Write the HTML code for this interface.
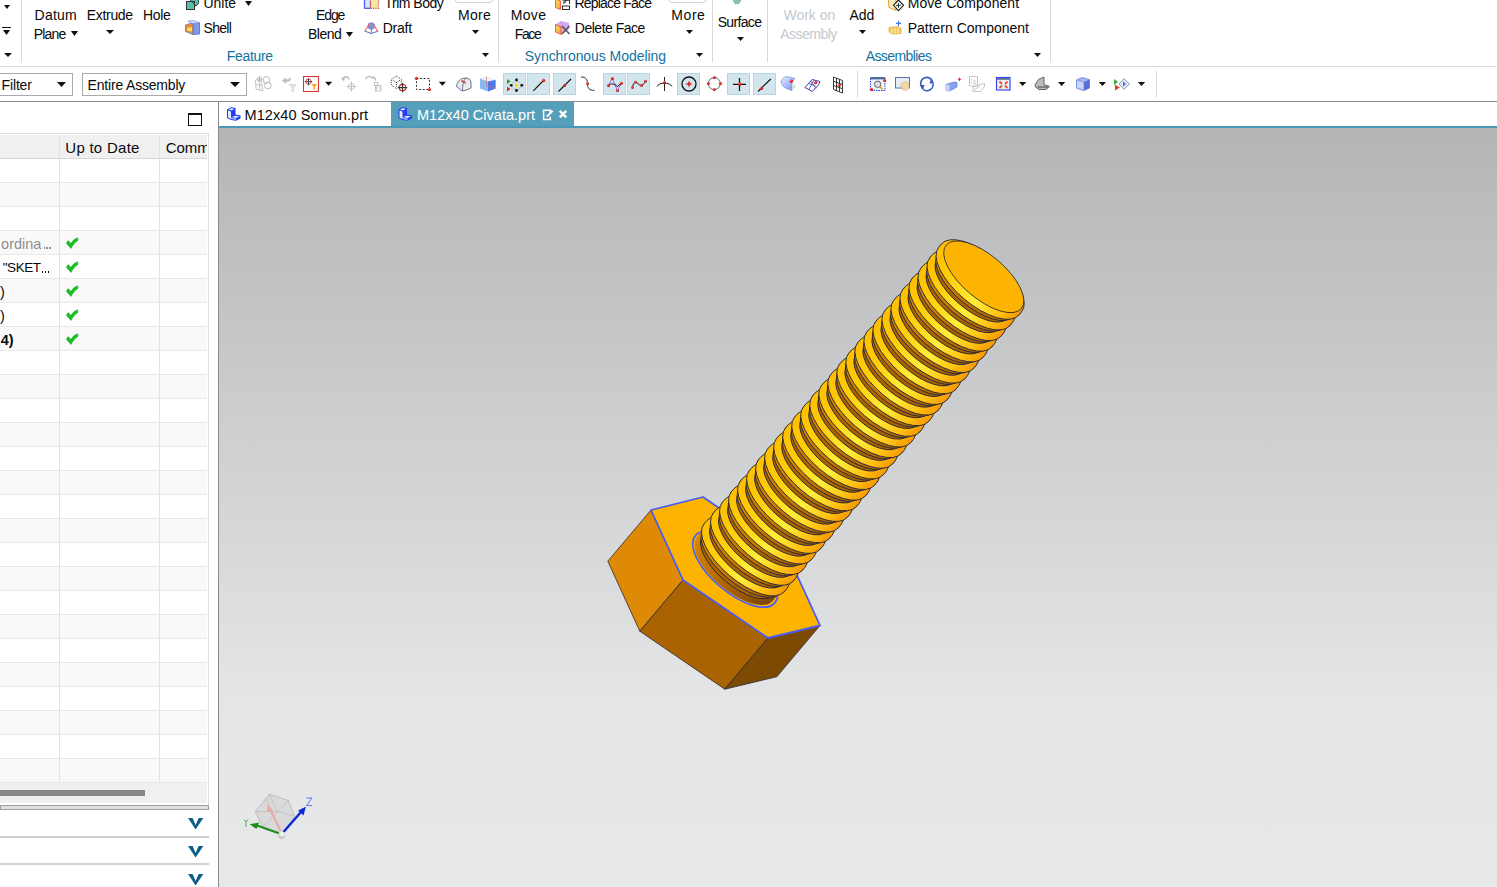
<!DOCTYPE html>
<html><head><meta charset="utf-8"><style>
html,body{margin:0;padding:0;width:1497px;height:887px;overflow:hidden;background:#fff}
body{position:relative;font-family:"Liberation Sans",sans-serif}
.t{position:absolute;white-space:nowrap;line-height:1}
.r{position:absolute}
</style></head><body>
<div class="r" style="left:219px;top:128px;width:1278px;height:759px;background:linear-gradient(#b4b5b7 0px,#e4e5e7 570px,#e7e8ea 759px)"></div>
<svg class="r" style="left:0;top:0" width="1497" height="887" viewBox="0 0 1497 887">
<defs>
<linearGradient id="gc" gradientUnits="userSpaceOnUse" x1="-52" y1="0" x2="52" y2="0">
<stop offset="0" stop-color="#ffbf00"/><stop offset="0.28" stop-color="#ffcf0a"/><stop offset="0.6" stop-color="#ffee3a"/><stop offset="0.85" stop-color="#ffc212"/><stop offset="1" stop-color="#f69a00"/></linearGradient>
<linearGradient id="gf" gradientUnits="userSpaceOnUse" x1="-52" y1="0" x2="52" y2="0">
<stop offset="0" stop-color="#e09000"/><stop offset="0.5" stop-color="#c47600"/><stop offset="1" stop-color="#a86000"/></linearGradient>
<linearGradient id="gn" gradientUnits="userSpaceOnUse" x1="-52" y1="0" x2="52" y2="0">
<stop offset="0" stop-color="#d88800"/><stop offset="0.6" stop-color="#a86000"/><stop offset="1" stop-color="#7a4400"/></linearGradient>
</defs>
<polygon points="651.0,510.0 683.0,580.0 639.8,631.2 607.8,561.2" fill="#de8a06" stroke="#2e2a30" stroke-width="0.8" stroke-linejoin="round"/>
<polygon points="683.0,580.0 768.0,638.0 724.8,689.2 639.8,631.2" fill="#a96300" stroke="#2e2a30" stroke-width="0.8" stroke-linejoin="round"/>
<polygon points="768.0,638.0 820.0,625.5 776.8,676.7 724.8,689.2" fill="#7c4a03" stroke="#2e2a30" stroke-width="0.8" stroke-linejoin="round"/>
<polygon points="651.0,510.0 703.0,497.0 788.0,555.5 820.0,625.5 768.0,638.0 683.0,580.0" fill="#fdb400" stroke="#4a5cf8" stroke-width="1.8" stroke-linejoin="round"/>
<g transform="matrix(0.76267,0.64679,-0.64679,0.76267,982.8,276.4)">
<ellipse cx="0.5" cy="383.5" rx="52" ry="22.88" fill="#fdb400" stroke="#4a5cf8" stroke-width="1.7"/>
<path d="M-49.50,369.50 A49.50,21.78 0 0 1 49.50,369.50 L49.50,383.50 A49.50,21.78 0 0 1 -49.50,383.50 Z" fill="url(#gn)" stroke="none"/>
<path d="M-49.25,373.63 A49.25,21.67 0 0 1 49.25,373.63 L46.00,378.65 A46.00,20.24 0 0 1 -46.00,378.65 Z" fill="#a86200" stroke="#2a2a38" stroke-width="0.9"/>
<path d="M-52.50,368.88 A52.50,23.10 0 0 1 52.50,368.88 L49.25,373.63 A49.25,21.67 0 0 1 -49.25,373.63 Z" fill="url(#gf)" stroke="#2a2a38" stroke-width="0.9"/>
<path d="M-52.50,364.70 A52.50,23.10 0 0 1 52.50,364.70 L52.50,368.88 A52.50,23.10 0 0 1 -52.50,368.88 Z" fill="url(#gc)" stroke="#2a2a38" stroke-width="0.9"/>
<path d="M-49.25,359.68 A49.25,21.67 0 0 1 49.25,359.68 L46.00,364.70 A46.00,20.24 0 0 1 -46.00,364.70 Z" fill="#a86200" stroke="#2a2a38" stroke-width="0.9"/>
<path d="M-52.50,354.94 A52.50,23.10 0 0 1 52.50,354.94 L49.25,359.68 A49.25,21.67 0 0 1 -49.25,359.68 Z" fill="url(#gf)" stroke="#2a2a38" stroke-width="0.9"/>
<path d="M-52.50,350.75 A52.50,23.10 0 0 1 52.50,350.75 L52.50,354.94 A52.50,23.10 0 0 1 -52.50,354.94 Z" fill="url(#gc)" stroke="#2a2a38" stroke-width="0.9"/>
<path d="M-49.25,345.73 A49.25,21.67 0 0 1 49.25,345.73 L46.00,350.75 A46.00,20.24 0 0 1 -46.00,350.75 Z" fill="#a86200" stroke="#2a2a38" stroke-width="0.9"/>
<path d="M-52.50,340.98 A52.50,23.10 0 0 1 52.50,340.98 L49.25,345.73 A49.25,21.67 0 0 1 -49.25,345.73 Z" fill="url(#gf)" stroke="#2a2a38" stroke-width="0.9"/>
<path d="M-52.50,336.80 A52.50,23.10 0 0 1 52.50,336.80 L52.50,340.98 A52.50,23.10 0 0 1 -52.50,340.98 Z" fill="url(#gc)" stroke="#2a2a38" stroke-width="0.9"/>
<path d="M-49.25,331.78 A49.25,21.67 0 0 1 49.25,331.78 L46.00,336.80 A46.00,20.24 0 0 1 -46.00,336.80 Z" fill="#a86200" stroke="#2a2a38" stroke-width="0.9"/>
<path d="M-52.50,327.03 A52.50,23.10 0 0 1 52.50,327.03 L49.25,331.78 A49.25,21.67 0 0 1 -49.25,331.78 Z" fill="url(#gf)" stroke="#2a2a38" stroke-width="0.9"/>
<path d="M-52.50,322.85 A52.50,23.10 0 0 1 52.50,322.85 L52.50,327.03 A52.50,23.10 0 0 1 -52.50,327.03 Z" fill="url(#gc)" stroke="#2a2a38" stroke-width="0.9"/>
<path d="M-49.25,317.83 A49.25,21.67 0 0 1 49.25,317.83 L46.00,322.85 A46.00,20.24 0 0 1 -46.00,322.85 Z" fill="#a86200" stroke="#2a2a38" stroke-width="0.9"/>
<path d="M-52.50,313.08 A52.50,23.10 0 0 1 52.50,313.08 L49.25,317.83 A49.25,21.67 0 0 1 -49.25,317.83 Z" fill="url(#gf)" stroke="#2a2a38" stroke-width="0.9"/>
<path d="M-52.50,308.90 A52.50,23.10 0 0 1 52.50,308.90 L52.50,313.08 A52.50,23.10 0 0 1 -52.50,313.08 Z" fill="url(#gc)" stroke="#2a2a38" stroke-width="0.9"/>
<path d="M-49.25,303.88 A49.25,21.67 0 0 1 49.25,303.88 L46.00,308.90 A46.00,20.24 0 0 1 -46.00,308.90 Z" fill="#a86200" stroke="#2a2a38" stroke-width="0.9"/>
<path d="M-52.50,299.13 A52.50,23.10 0 0 1 52.50,299.13 L49.25,303.88 A49.25,21.67 0 0 1 -49.25,303.88 Z" fill="url(#gf)" stroke="#2a2a38" stroke-width="0.9"/>
<path d="M-52.50,294.95 A52.50,23.10 0 0 1 52.50,294.95 L52.50,299.13 A52.50,23.10 0 0 1 -52.50,299.13 Z" fill="url(#gc)" stroke="#2a2a38" stroke-width="0.9"/>
<path d="M-49.25,289.93 A49.25,21.67 0 0 1 49.25,289.93 L46.00,294.95 A46.00,20.24 0 0 1 -46.00,294.95 Z" fill="#a86200" stroke="#2a2a38" stroke-width="0.9"/>
<path d="M-52.50,285.19 A52.50,23.10 0 0 1 52.50,285.19 L49.25,289.93 A49.25,21.67 0 0 1 -49.25,289.93 Z" fill="url(#gf)" stroke="#2a2a38" stroke-width="0.9"/>
<path d="M-52.50,281.00 A52.50,23.10 0 0 1 52.50,281.00 L52.50,285.19 A52.50,23.10 0 0 1 -52.50,285.19 Z" fill="url(#gc)" stroke="#2a2a38" stroke-width="0.9"/>
<path d="M-49.25,275.98 A49.25,21.67 0 0 1 49.25,275.98 L46.00,281.00 A46.00,20.24 0 0 1 -46.00,281.00 Z" fill="#a86200" stroke="#2a2a38" stroke-width="0.9"/>
<path d="M-52.50,271.24 A52.50,23.10 0 0 1 52.50,271.24 L49.25,275.98 A49.25,21.67 0 0 1 -49.25,275.98 Z" fill="url(#gf)" stroke="#2a2a38" stroke-width="0.9"/>
<path d="M-52.50,267.05 A52.50,23.10 0 0 1 52.50,267.05 L52.50,271.24 A52.50,23.10 0 0 1 -52.50,271.24 Z" fill="url(#gc)" stroke="#2a2a38" stroke-width="0.9"/>
<path d="M-49.25,262.03 A49.25,21.67 0 0 1 49.25,262.03 L46.00,267.05 A46.00,20.24 0 0 1 -46.00,267.05 Z" fill="#a86200" stroke="#2a2a38" stroke-width="0.9"/>
<path d="M-52.50,257.28 A52.50,23.10 0 0 1 52.50,257.28 L49.25,262.03 A49.25,21.67 0 0 1 -49.25,262.03 Z" fill="url(#gf)" stroke="#2a2a38" stroke-width="0.9"/>
<path d="M-52.50,253.10 A52.50,23.10 0 0 1 52.50,253.10 L52.50,257.28 A52.50,23.10 0 0 1 -52.50,257.28 Z" fill="url(#gc)" stroke="#2a2a38" stroke-width="0.9"/>
<path d="M-49.25,248.08 A49.25,21.67 0 0 1 49.25,248.08 L46.00,253.10 A46.00,20.24 0 0 1 -46.00,253.10 Z" fill="#a86200" stroke="#2a2a38" stroke-width="0.9"/>
<path d="M-52.50,243.33 A52.50,23.10 0 0 1 52.50,243.33 L49.25,248.08 A49.25,21.67 0 0 1 -49.25,248.08 Z" fill="url(#gf)" stroke="#2a2a38" stroke-width="0.9"/>
<path d="M-52.50,239.15 A52.50,23.10 0 0 1 52.50,239.15 L52.50,243.33 A52.50,23.10 0 0 1 -52.50,243.33 Z" fill="url(#gc)" stroke="#2a2a38" stroke-width="0.9"/>
<path d="M-49.25,234.13 A49.25,21.67 0 0 1 49.25,234.13 L46.00,239.15 A46.00,20.24 0 0 1 -46.00,239.15 Z" fill="#a86200" stroke="#2a2a38" stroke-width="0.9"/>
<path d="M-52.50,229.38 A52.50,23.10 0 0 1 52.50,229.38 L49.25,234.13 A49.25,21.67 0 0 1 -49.25,234.13 Z" fill="url(#gf)" stroke="#2a2a38" stroke-width="0.9"/>
<path d="M-52.50,225.20 A52.50,23.10 0 0 1 52.50,225.20 L52.50,229.38 A52.50,23.10 0 0 1 -52.50,229.38 Z" fill="url(#gc)" stroke="#2a2a38" stroke-width="0.9"/>
<path d="M-49.25,220.18 A49.25,21.67 0 0 1 49.25,220.18 L46.00,225.20 A46.00,20.24 0 0 1 -46.00,225.20 Z" fill="#a86200" stroke="#2a2a38" stroke-width="0.9"/>
<path d="M-52.50,215.44 A52.50,23.10 0 0 1 52.50,215.44 L49.25,220.18 A49.25,21.67 0 0 1 -49.25,220.18 Z" fill="url(#gf)" stroke="#2a2a38" stroke-width="0.9"/>
<path d="M-52.50,211.25 A52.50,23.10 0 0 1 52.50,211.25 L52.50,215.44 A52.50,23.10 0 0 1 -52.50,215.44 Z" fill="url(#gc)" stroke="#2a2a38" stroke-width="0.9"/>
<path d="M-49.25,206.23 A49.25,21.67 0 0 1 49.25,206.23 L46.00,211.25 A46.00,20.24 0 0 1 -46.00,211.25 Z" fill="#a86200" stroke="#2a2a38" stroke-width="0.9"/>
<path d="M-52.50,201.48 A52.50,23.10 0 0 1 52.50,201.48 L49.25,206.23 A49.25,21.67 0 0 1 -49.25,206.23 Z" fill="url(#gf)" stroke="#2a2a38" stroke-width="0.9"/>
<path d="M-52.50,197.30 A52.50,23.10 0 0 1 52.50,197.30 L52.50,201.48 A52.50,23.10 0 0 1 -52.50,201.48 Z" fill="url(#gc)" stroke="#2a2a38" stroke-width="0.9"/>
<path d="M-49.25,192.28 A49.25,21.67 0 0 1 49.25,192.28 L46.00,197.30 A46.00,20.24 0 0 1 -46.00,197.30 Z" fill="#a86200" stroke="#2a2a38" stroke-width="0.9"/>
<path d="M-52.50,187.53 A52.50,23.10 0 0 1 52.50,187.53 L49.25,192.28 A49.25,21.67 0 0 1 -49.25,192.28 Z" fill="url(#gf)" stroke="#2a2a38" stroke-width="0.9"/>
<path d="M-52.50,183.35 A52.50,23.10 0 0 1 52.50,183.35 L52.50,187.53 A52.50,23.10 0 0 1 -52.50,187.53 Z" fill="url(#gc)" stroke="#2a2a38" stroke-width="0.9"/>
<path d="M-49.25,178.33 A49.25,21.67 0 0 1 49.25,178.33 L46.00,183.35 A46.00,20.24 0 0 1 -46.00,183.35 Z" fill="#a86200" stroke="#2a2a38" stroke-width="0.9"/>
<path d="M-52.50,173.58 A52.50,23.10 0 0 1 52.50,173.58 L49.25,178.33 A49.25,21.67 0 0 1 -49.25,178.33 Z" fill="url(#gf)" stroke="#2a2a38" stroke-width="0.9"/>
<path d="M-52.50,169.40 A52.50,23.10 0 0 1 52.50,169.40 L52.50,173.58 A52.50,23.10 0 0 1 -52.50,173.58 Z" fill="url(#gc)" stroke="#2a2a38" stroke-width="0.9"/>
<path d="M-49.25,164.38 A49.25,21.67 0 0 1 49.25,164.38 L46.00,169.40 A46.00,20.24 0 0 1 -46.00,169.40 Z" fill="#a86200" stroke="#2a2a38" stroke-width="0.9"/>
<path d="M-52.50,159.63 A52.50,23.10 0 0 1 52.50,159.63 L49.25,164.38 A49.25,21.67 0 0 1 -49.25,164.38 Z" fill="url(#gf)" stroke="#2a2a38" stroke-width="0.9"/>
<path d="M-52.50,155.45 A52.50,23.10 0 0 1 52.50,155.45 L52.50,159.63 A52.50,23.10 0 0 1 -52.50,159.63 Z" fill="url(#gc)" stroke="#2a2a38" stroke-width="0.9"/>
<path d="M-49.25,150.43 A49.25,21.67 0 0 1 49.25,150.43 L46.00,155.45 A46.00,20.24 0 0 1 -46.00,155.45 Z" fill="#a86200" stroke="#2a2a38" stroke-width="0.9"/>
<path d="M-52.50,145.69 A52.50,23.10 0 0 1 52.50,145.69 L49.25,150.43 A49.25,21.67 0 0 1 -49.25,150.43 Z" fill="url(#gf)" stroke="#2a2a38" stroke-width="0.9"/>
<path d="M-52.50,141.50 A52.50,23.10 0 0 1 52.50,141.50 L52.50,145.69 A52.50,23.10 0 0 1 -52.50,145.69 Z" fill="url(#gc)" stroke="#2a2a38" stroke-width="0.9"/>
<path d="M-49.25,136.48 A49.25,21.67 0 0 1 49.25,136.48 L46.00,141.50 A46.00,20.24 0 0 1 -46.00,141.50 Z" fill="#a86200" stroke="#2a2a38" stroke-width="0.9"/>
<path d="M-52.50,131.73 A52.50,23.10 0 0 1 52.50,131.73 L49.25,136.48 A49.25,21.67 0 0 1 -49.25,136.48 Z" fill="url(#gf)" stroke="#2a2a38" stroke-width="0.9"/>
<path d="M-52.50,127.55 A52.50,23.10 0 0 1 52.50,127.55 L52.50,131.73 A52.50,23.10 0 0 1 -52.50,131.73 Z" fill="url(#gc)" stroke="#2a2a38" stroke-width="0.9"/>
<path d="M-49.25,122.53 A49.25,21.67 0 0 1 49.25,122.53 L46.00,127.55 A46.00,20.24 0 0 1 -46.00,127.55 Z" fill="#a86200" stroke="#2a2a38" stroke-width="0.9"/>
<path d="M-52.50,117.78 A52.50,23.10 0 0 1 52.50,117.78 L49.25,122.53 A49.25,21.67 0 0 1 -49.25,122.53 Z" fill="url(#gf)" stroke="#2a2a38" stroke-width="0.9"/>
<path d="M-52.50,113.60 A52.50,23.10 0 0 1 52.50,113.60 L52.50,117.78 A52.50,23.10 0 0 1 -52.50,117.78 Z" fill="url(#gc)" stroke="#2a2a38" stroke-width="0.9"/>
<path d="M-49.25,108.58 A49.25,21.67 0 0 1 49.25,108.58 L46.00,113.60 A46.00,20.24 0 0 1 -46.00,113.60 Z" fill="#a86200" stroke="#2a2a38" stroke-width="0.9"/>
<path d="M-52.50,103.83 A52.50,23.10 0 0 1 52.50,103.83 L49.25,108.58 A49.25,21.67 0 0 1 -49.25,108.58 Z" fill="url(#gf)" stroke="#2a2a38" stroke-width="0.9"/>
<path d="M-52.50,99.65 A52.50,23.10 0 0 1 52.50,99.65 L52.50,103.83 A52.50,23.10 0 0 1 -52.50,103.83 Z" fill="url(#gc)" stroke="#2a2a38" stroke-width="0.9"/>
<path d="M-49.25,94.63 A49.25,21.67 0 0 1 49.25,94.63 L46.00,99.65 A46.00,20.24 0 0 1 -46.00,99.65 Z" fill="#a86200" stroke="#2a2a38" stroke-width="0.9"/>
<path d="M-52.50,89.88 A52.50,23.10 0 0 1 52.50,89.88 L49.25,94.63 A49.25,21.67 0 0 1 -49.25,94.63 Z" fill="url(#gf)" stroke="#2a2a38" stroke-width="0.9"/>
<path d="M-52.50,85.70 A52.50,23.10 0 0 1 52.50,85.70 L52.50,89.88 A52.50,23.10 0 0 1 -52.50,89.88 Z" fill="url(#gc)" stroke="#2a2a38" stroke-width="0.9"/>
<path d="M-49.25,80.68 A49.25,21.67 0 0 1 49.25,80.68 L46.00,85.70 A46.00,20.24 0 0 1 -46.00,85.70 Z" fill="#a86200" stroke="#2a2a38" stroke-width="0.9"/>
<path d="M-52.50,75.94 A52.50,23.10 0 0 1 52.50,75.94 L49.25,80.68 A49.25,21.67 0 0 1 -49.25,80.68 Z" fill="url(#gf)" stroke="#2a2a38" stroke-width="0.9"/>
<path d="M-52.50,71.75 A52.50,23.10 0 0 1 52.50,71.75 L52.50,75.94 A52.50,23.10 0 0 1 -52.50,75.94 Z" fill="url(#gc)" stroke="#2a2a38" stroke-width="0.9"/>
<path d="M-49.25,66.73 A49.25,21.67 0 0 1 49.25,66.73 L46.00,71.75 A46.00,20.24 0 0 1 -46.00,71.75 Z" fill="#a86200" stroke="#2a2a38" stroke-width="0.9"/>
<path d="M-52.50,61.98 A52.50,23.10 0 0 1 52.50,61.98 L49.25,66.73 A49.25,21.67 0 0 1 -49.25,66.73 Z" fill="url(#gf)" stroke="#2a2a38" stroke-width="0.9"/>
<path d="M-52.50,57.80 A52.50,23.10 0 0 1 52.50,57.80 L52.50,61.98 A52.50,23.10 0 0 1 -52.50,61.98 Z" fill="url(#gc)" stroke="#2a2a38" stroke-width="0.9"/>
<path d="M-49.25,52.78 A49.25,21.67 0 0 1 49.25,52.78 L46.00,57.80 A46.00,20.24 0 0 1 -46.00,57.80 Z" fill="#a86200" stroke="#2a2a38" stroke-width="0.9"/>
<path d="M-52.50,48.03 A52.50,23.10 0 0 1 52.50,48.03 L49.25,52.78 A49.25,21.67 0 0 1 -49.25,52.78 Z" fill="url(#gf)" stroke="#2a2a38" stroke-width="0.9"/>
<path d="M-52.50,43.85 A52.50,23.10 0 0 1 52.50,43.85 L52.50,48.03 A52.50,23.10 0 0 1 -52.50,48.03 Z" fill="url(#gc)" stroke="#2a2a38" stroke-width="0.9"/>
<path d="M-49.25,38.83 A49.25,21.67 0 0 1 49.25,38.83 L46.00,43.85 A46.00,20.24 0 0 1 -46.00,43.85 Z" fill="#a86200" stroke="#2a2a38" stroke-width="0.9"/>
<path d="M-52.50,34.09 A52.50,23.10 0 0 1 52.50,34.09 L49.25,38.83 A49.25,21.67 0 0 1 -49.25,38.83 Z" fill="url(#gf)" stroke="#2a2a38" stroke-width="0.9"/>
<path d="M-52.50,29.90 A52.50,23.10 0 0 1 52.50,29.90 L52.50,34.09 A52.50,23.10 0 0 1 -52.50,34.09 Z" fill="url(#gc)" stroke="#2a2a38" stroke-width="0.9"/>
<path d="M-49.25,24.88 A49.25,21.67 0 0 1 49.25,24.88 L46.00,29.90 A46.00,20.24 0 0 1 -46.00,29.90 Z" fill="#a86200" stroke="#2a2a38" stroke-width="0.9"/>
<path d="M-52.50,20.13 A52.50,23.10 0 0 1 52.50,20.13 L49.25,24.88 A49.25,21.67 0 0 1 -49.25,24.88 Z" fill="url(#gf)" stroke="#2a2a38" stroke-width="0.9"/>
<path d="M-52.50,15.95 A52.50,23.10 0 0 1 52.50,15.95 L52.50,20.13 A52.50,23.10 0 0 1 -52.50,20.13 Z" fill="url(#gc)" stroke="#2a2a38" stroke-width="0.9"/>
<path d="M-49.25,10.93 A49.25,21.67 0 0 1 49.25,10.93 L46.00,15.95 A46.00,20.24 0 0 1 -46.00,15.95 Z" fill="#a86200" stroke="#2a2a38" stroke-width="0.9"/>
<path d="M-52.50,6.18 A52.50,23.10 0 0 1 52.50,6.18 L49.25,10.93 A49.25,21.67 0 0 1 -49.25,10.93 Z" fill="url(#gf)" stroke="#2a2a38" stroke-width="0.9"/>
<path d="M-52.50,2.00 A52.50,23.10 0 0 1 52.50,2.00 L52.50,6.18 A52.50,23.10 0 0 1 -52.50,6.18 Z" fill="url(#gc)" stroke="#2a2a38" stroke-width="0.9"/>
<ellipse cx="1.0" cy="-0.3" rx="49.2" ry="21.65" fill="#fdb400" stroke="#2a2a38" stroke-width="0.8"/>
</g>
</svg><div class="r" style="left:0px;top:66px;width:1497px;height:1px;background:#dcdcdc"></div>
<div class="r" style="left:21px;top:0px;width:1px;height:62px;background:#d9d9d9"></div>
<div class="r" style="left:498px;top:0px;width:1px;height:62px;background:#d9d9d9"></div>
<div class="r" style="left:712px;top:0px;width:1px;height:62px;background:#d9d9d9"></div>
<div class="r" style="left:767px;top:0px;width:1px;height:62px;background:#d9d9d9"></div>
<div class="r" style="left:1050px;top:0px;width:1px;height:62px;background:#d9d9d9"></div>
<svg class="r" style="left:4px;top:5px" width="6" height="4"><polygon points="0,0 6,0 3.0,4" fill="#111"/></svg>
<div class="r" style="left:2px;top:27px;width:9px;height:1px;background:#111"></div>
<svg class="r" style="left:3px;top:30px" width="7" height="5"><polygon points="0,0 7,0 3.5,5" fill="#111"/></svg>
<svg class="r" style="left:4px;top:53px" width="8" height="4"><polygon points="0,0 8,0 4.0,4" fill="#111"/></svg>
<svg class="r" style="left:71px;top:31px" width="7" height="5"><polygon points="0,0 7,0 3.5,5" fill="#111"/></svg>
<svg class="r" style="left:106px;top:30px" width="8" height="4"><polygon points="0,0 8,0 4.0,4" fill="#111"/></svg>
<svg class="r" style="left:245px;top:1px" width="7" height="5"><polygon points="0,0 7,0 3.5,5" fill="#111"/></svg>
<svg class="r" style="left:346px;top:32px" width="7" height="5"><polygon points="0,0 7,0 3.5,5" fill="#111"/></svg>
<svg class="r" style="left:472px;top:30px" width="7" height="4"><polygon points="0,0 7,0 3.5,4" fill="#111"/></svg>
<svg class="r" style="left:482px;top:53px" width="7" height="4"><polygon points="0,0 7,0 3.5,4" fill="#111"/></svg>
<svg class="r" style="left:686px;top:30px" width="7" height="4"><polygon points="0,0 7,0 3.5,4" fill="#111"/></svg>
<svg class="r" style="left:696px;top:53px" width="7" height="4"><polygon points="0,0 7,0 3.5,4" fill="#111"/></svg>
<svg class="r" style="left:737px;top:37px" width="7" height="4"><polygon points="0,0 7,0 3.5,4" fill="#111"/></svg>
<svg class="r" style="left:859px;top:30px" width="7" height="4"><polygon points="0,0 7,0 3.5,4" fill="#111"/></svg>
<svg class="r" style="left:1034px;top:53px" width="7" height="4"><polygon points="0,0 7,0 3.5,4" fill="#111"/></svg>
<div class="r" style="left:455px;top:-7px;width:38px;height:10px;border:1px solid #d0d0d0;border-radius:3px;box-sizing:border-box"></div>
<div class="r" style="left:669px;top:-7px;width:37px;height:10px;border:1px solid #d0d0d0;border-radius:3px;box-sizing:border-box"></div>
<div class="r" style="left:-2px;top:73px;width:75px;height:23px;border:1px solid #a9a9a9;box-sizing:border-box;background:#fff"></div>
<svg class="r" style="left:57px;top:82px" width="9" height="5"><polygon points="0,0 9,0 4.5,5" fill="#111"/></svg>
<div class="r" style="left:82px;top:73px;width:165px;height:23px;border:1px solid #a9a9a9;box-sizing:border-box;background:#fff"></div>
<svg class="r" style="left:230px;top:82px" width="10" height="5"><polygon points="0,0 10,0 5.0,5" fill="#111"/></svg>
<div class="r" style="left:857px;top:71px;width:1px;height:27px;background:#d9d9d9"></div>
<div class="r" style="left:1156px;top:71px;width:1px;height:27px;background:#d9d9d9"></div>
<div class="r" style="left:503px;top:73px;width:23px;height:22px;background:#d3e6ee;border:1px solid #b7d5e2;box-sizing:border-box"></div>
<div class="r" style="left:527px;top:73px;width:23px;height:22px;background:#d3e6ee;border:1px solid #b7d5e2;box-sizing:border-box"></div>
<div class="r" style="left:553px;top:73px;width:23px;height:22px;background:#d3e6ee;border:1px solid #b7d5e2;box-sizing:border-box"></div>
<div class="r" style="left:603px;top:73px;width:23px;height:22px;background:#d3e6ee;border:1px solid #b7d5e2;box-sizing:border-box"></div>
<div class="r" style="left:627px;top:73px;width:23px;height:22px;background:#d3e6ee;border:1px solid #b7d5e2;box-sizing:border-box"></div>
<div class="r" style="left:677px;top:73px;width:23px;height:22px;background:#d3e6ee;border:1px solid #b7d5e2;box-sizing:border-box"></div>
<div class="r" style="left:727px;top:73px;width:23px;height:22px;background:#d3e6ee;border:1px solid #b7d5e2;box-sizing:border-box"></div>
<div class="r" style="left:753px;top:73px;width:23px;height:22px;background:#d3e6ee;border:1px solid #b7d5e2;box-sizing:border-box"></div>
<div class="r" style="left:0px;top:101px;width:1497px;height:1px;background:#828d91"></div>
<div class="r" style="left:218px;top:101px;width:1px;height:786px;background:#828d91"></div>
<div class="r" style="left:391px;top:102px;width:183px;height:24px;background:#569fba"></div>
<div class="r" style="left:219px;top:126px;width:1278px;height:2px;background:#4a98b5"></div>
<div class="r" style="left:188px;top:113px;width:14px;height:13px;border:1px solid #111;border-top-width:2px;box-sizing:border-box"></div>
<div class="r" style="left:0px;top:133px;width:209px;height:1px;background:#dedede"></div>
<div class="r" style="left:0px;top:135px;width:207px;height:23px;background:#f0f0f0"></div>
<div class="r" style="left:0px;top:158px;width:207px;height:1px;background:#d6d6d6"></div>
<div class="r" style="left:0px;top:182px;width:207px;height:1px;background:#e8e8e8"></div>
<div class="r" style="left:0px;top:183px;width:207px;height:23px;background:#f9f9f9"></div>
<div class="r" style="left:0px;top:206px;width:207px;height:1px;background:#e8e8e8"></div>
<div class="r" style="left:0px;top:230px;width:207px;height:1px;background:#e8e8e8"></div>
<div class="r" style="left:0px;top:231px;width:207px;height:23px;background:#f9f9f9"></div>
<div class="r" style="left:0px;top:254px;width:207px;height:1px;background:#e8e8e8"></div>
<div class="r" style="left:0px;top:278px;width:207px;height:1px;background:#e8e8e8"></div>
<div class="r" style="left:0px;top:279px;width:207px;height:23px;background:#f9f9f9"></div>
<div class="r" style="left:0px;top:302px;width:207px;height:1px;background:#e8e8e8"></div>
<div class="r" style="left:0px;top:326px;width:207px;height:1px;background:#e8e8e8"></div>
<div class="r" style="left:0px;top:327px;width:207px;height:23px;background:#f9f9f9"></div>
<div class="r" style="left:0px;top:350px;width:207px;height:1px;background:#e8e8e8"></div>
<div class="r" style="left:0px;top:374px;width:207px;height:1px;background:#e8e8e8"></div>
<div class="r" style="left:0px;top:375px;width:207px;height:23px;background:#f9f9f9"></div>
<div class="r" style="left:0px;top:398px;width:207px;height:1px;background:#e8e8e8"></div>
<div class="r" style="left:0px;top:422px;width:207px;height:1px;background:#e8e8e8"></div>
<div class="r" style="left:0px;top:423px;width:207px;height:23px;background:#f9f9f9"></div>
<div class="r" style="left:0px;top:446px;width:207px;height:1px;background:#e8e8e8"></div>
<div class="r" style="left:0px;top:470px;width:207px;height:1px;background:#e8e8e8"></div>
<div class="r" style="left:0px;top:471px;width:207px;height:23px;background:#f9f9f9"></div>
<div class="r" style="left:0px;top:494px;width:207px;height:1px;background:#e8e8e8"></div>
<div class="r" style="left:0px;top:518px;width:207px;height:1px;background:#e8e8e8"></div>
<div class="r" style="left:0px;top:519px;width:207px;height:23px;background:#f9f9f9"></div>
<div class="r" style="left:0px;top:542px;width:207px;height:1px;background:#e8e8e8"></div>
<div class="r" style="left:0px;top:566px;width:207px;height:1px;background:#e8e8e8"></div>
<div class="r" style="left:0px;top:567px;width:207px;height:23px;background:#f9f9f9"></div>
<div class="r" style="left:0px;top:590px;width:207px;height:1px;background:#e8e8e8"></div>
<div class="r" style="left:0px;top:614px;width:207px;height:1px;background:#e8e8e8"></div>
<div class="r" style="left:0px;top:615px;width:207px;height:23px;background:#f9f9f9"></div>
<div class="r" style="left:0px;top:638px;width:207px;height:1px;background:#e8e8e8"></div>
<div class="r" style="left:0px;top:662px;width:207px;height:1px;background:#e8e8e8"></div>
<div class="r" style="left:0px;top:663px;width:207px;height:23px;background:#f9f9f9"></div>
<div class="r" style="left:0px;top:686px;width:207px;height:1px;background:#e8e8e8"></div>
<div class="r" style="left:0px;top:710px;width:207px;height:1px;background:#e8e8e8"></div>
<div class="r" style="left:0px;top:711px;width:207px;height:23px;background:#f9f9f9"></div>
<div class="r" style="left:0px;top:734px;width:207px;height:1px;background:#e8e8e8"></div>
<div class="r" style="left:0px;top:758px;width:207px;height:1px;background:#e8e8e8"></div>
<div class="r" style="left:0px;top:759px;width:207px;height:23px;background:#f9f9f9"></div>
<div class="r" style="left:0px;top:782px;width:207px;height:1px;background:#e8e8e8"></div>
<div class="r" style="left:59px;top:135px;width:1px;height:648px;background:#e3e3e3"></div>
<div class="r" style="left:159px;top:135px;width:1px;height:648px;background:#e3e3e3"></div>
<div class="r" style="left:208px;top:133px;width:1px;height:672px;background:#dedede"></div>
<div class="r" style="left:0px;top:783px;width:207px;height:20px;background:#f0f0f0"></div>
<div class="r" style="left:0px;top:790px;width:145px;height:6px;background:#888"></div>
<div class="r" style="left:0px;top:805px;width:209px;height:5px;background:#e0e0e0;border:1px solid #9e9e9e;box-sizing:border-box"></div>
<div class="r" style="left:0px;top:836px;width:209px;height:2px;background:#d0d0d0"></div>
<div class="r" style="left:0px;top:863px;width:209px;height:2px;background:#d0d0d0"></div>
<svg class="r" style="left:188px;top:817.5px" width="16" height="13"><polygon points="0,0 4.6,0 7.6,7 10.7,0 15.3,0 7.6,11.5" fill="#0b5f86"/></svg>
<svg class="r" style="left:188px;top:845.5px" width="16" height="13"><polygon points="0,0 4.6,0 7.6,7 10.7,0 15.3,0 7.6,11.5" fill="#0b5f86"/></svg>
<svg class="r" style="left:188px;top:873.5px" width="16" height="13"><polygon points="0,0 4.6,0 7.6,7 10.7,0 15.3,0 7.6,11.5" fill="#0b5f86"/></svg>
<svg class="r" style="left:64px;top:234px" width="16" height="16"><path d="M2.3,9.2 L4.3,6.6 L6.8,9.6 C8.5,7 10.5,4.8 13.6,3.8 L13.9,6.4 C11.5,7.5 9,10.5 7,14.5 Z" fill="#12c21a" stroke="#0aa812" stroke-width="0.5" stroke-linejoin="round"/></svg>
<svg class="r" style="left:64px;top:258px" width="16" height="16"><path d="M2.3,9.2 L4.3,6.6 L6.8,9.6 C8.5,7 10.5,4.8 13.6,3.8 L13.9,6.4 C11.5,7.5 9,10.5 7,14.5 Z" fill="#12c21a" stroke="#0aa812" stroke-width="0.5" stroke-linejoin="round"/></svg>
<svg class="r" style="left:64px;top:282px" width="16" height="16"><path d="M2.3,9.2 L4.3,6.6 L6.8,9.6 C8.5,7 10.5,4.8 13.6,3.8 L13.9,6.4 C11.5,7.5 9,10.5 7,14.5 Z" fill="#12c21a" stroke="#0aa812" stroke-width="0.5" stroke-linejoin="round"/></svg>
<svg class="r" style="left:64px;top:306px" width="16" height="16"><path d="M2.3,9.2 L4.3,6.6 L6.8,9.6 C8.5,7 10.5,4.8 13.6,3.8 L13.9,6.4 C11.5,7.5 9,10.5 7,14.5 Z" fill="#12c21a" stroke="#0aa812" stroke-width="0.5" stroke-linejoin="round"/></svg>
<svg class="r" style="left:64px;top:330px" width="16" height="16"><path d="M2.3,9.2 L4.3,6.6 L6.8,9.6 C8.5,7 10.5,4.8 13.6,3.8 L13.9,6.4 C11.5,7.5 9,10.5 7,14.5 Z" fill="#12c21a" stroke="#0aa812" stroke-width="0.5" stroke-linejoin="round"/></svg>
<div class="t" style="left:34.6px;top:8.15px;font-size:14px;color:#0a0a0a;font-weight:normal;letter-spacing:0.2px;">Datum</div>
<div class="t" style="left:33.7px;top:26.75px;font-size:14px;color:#0a0a0a;font-weight:normal;letter-spacing:-0.8px;">Plane</div>
<div class="t" style="left:86.7px;top:8.15px;font-size:14px;color:#0a0a0a;font-weight:normal;letter-spacing:-0.3px;">Extrude</div>
<div class="t" style="left:143.0px;top:8.15px;font-size:14px;color:#0a0a0a;font-weight:normal;letter-spacing:-0.333px;">Hole</div>
<div class="t" style="left:203.5px;top:-3.85px;font-size:14px;color:#0a0a0a;font-weight:normal;letter-spacing:-0.025px;">Unite</div>
<div class="t" style="left:203.5px;top:20.85px;font-size:14px;color:#0a0a0a;font-weight:normal;letter-spacing:-0.7px;">Shell</div>
<div class="t" style="left:316.0px;top:8.15px;font-size:14px;color:#0a0a0a;font-weight:normal;letter-spacing:-1.1px;">Edge</div>
<div class="t" style="left:308.0px;top:26.85px;font-size:14px;color:#0a0a0a;font-weight:normal;letter-spacing:-0.5px;">Blend</div>
<div class="t" style="left:384.5px;top:-3.85px;font-size:14px;color:#0a0a0a;font-weight:normal;letter-spacing:-0.5px;">Trim Body</div>
<div class="t" style="left:382.7px;top:20.85px;font-size:14px;color:#0a0a0a;font-weight:normal;letter-spacing:-0.225px;">Draft</div>
<div class="t" style="left:457.9px;top:8.15px;font-size:14px;color:#0a0a0a;font-weight:normal;letter-spacing:0.367px;">More</div>
<div class="t" style="left:510.7px;top:8.15px;font-size:14px;color:#0a0a0a;font-weight:normal;letter-spacing:0.333px;">Move</div>
<div class="t" style="left:514.7px;top:26.85px;font-size:14px;color:#0a0a0a;font-weight:normal;letter-spacing:-1.333px;">Face</div>
<div class="t" style="left:574.4px;top:-3.85px;font-size:14px;color:#0a0a0a;font-weight:normal;letter-spacing:-0.8px;">Replace Face</div>
<div class="t" style="left:574.8px;top:20.85px;font-size:14px;color:#0a0a0a;font-weight:normal;letter-spacing:-0.49px;">Delete Face</div>
<div class="t" style="left:671.3px;top:8.15px;font-size:14px;color:#0a0a0a;font-weight:normal;letter-spacing:0.567px;">More</div>
<div class="t" style="left:717.7px;top:14.85px;font-size:14px;color:#0a0a0a;font-weight:normal;letter-spacing:-0.667px;">Surface</div>
<div class="t" style="left:783.5px;top:8.15px;font-size:14px;color:#c4c8d0;font-weight:normal;letter-spacing:-0.033px;">Work on</div>
<div class="t" style="left:780.2px;top:26.85px;font-size:14px;color:#c4c8d0;font-weight:normal;letter-spacing:-0.514px;">Assembly</div>
<div class="t" style="left:849.4px;top:8.15px;font-size:14px;color:#0a0a0a;font-weight:normal;letter-spacing:0.0px;">Add</div>
<div class="t" style="left:907.7px;top:-3.85px;font-size:14px;color:#0a0a0a;font-weight:normal;letter-spacing:0.069px;">Move Component</div>
<div class="t" style="left:907.7px;top:20.85px;font-size:14px;color:#0a0a0a;font-weight:normal;letter-spacing:-0.006px;">Pattern Component</div>
<div class="t" style="left:226.7px;top:48.95px;font-size:14px;color:#13729f;font-weight:normal;letter-spacing:-0.3px;">Feature</div>
<div class="t" style="left:524.7px;top:48.95px;font-size:14px;color:#13729f;font-weight:normal;letter-spacing:-0.058px;">Synchronous Modeling</div>
<div class="t" style="left:865.7px;top:48.95px;font-size:14px;color:#13729f;font-weight:normal;letter-spacing:-0.578px;">Assemblies</div>
<div class="t" style="left:1.6px;top:77.65px;font-size:14px;color:#0a0a0a;font-weight:normal;letter-spacing:-0.16px;">Filter</div>
<div class="t" style="left:87.6px;top:77.65px;font-size:14px;color:#0a0a0a;font-weight:normal;letter-spacing:-0.186px;">Entire Assembly</div>
<div class="t" style="left:244.5px;top:107.53px;font-size:14.5px;color:#0a0a0a;font-weight:normal;letter-spacing:0.073px;">M12x40 Somun.prt</div>
<div class="t" style="left:417.0px;top:107.53px;font-size:14.5px;color:#ffffff;font-weight:normal;letter-spacing:0.025px;">M12x40 Civata.prt</div>
<div class="t" style="left:65.3px;top:139.90px;font-size:15px;color:#0a0a0a;font-weight:normal;letter-spacing:0.267px;">Up to Date</div>
<div class="t" style="left:165.7px;top:139.90px;font-size:15px;color:#0a0a0a;font-weight:normal;letter-spacing:0px;">Comm</div>
<div class="t" style="left:1.1px;top:236.53px;font-size:14.5px;color:#8e8e8e;font-weight:normal;letter-spacing:0px;">ordina</div>
<div class="t" style="left:2.8px;top:261.37px;font-size:13.5px;color:#0a0a0a;font-weight:normal;letter-spacing:-0.475px;">"SKET</div>
<div class="t" style="left:0.0px;top:284.53px;font-size:14.5px;color:#0a0a0a;font-weight:normal;letter-spacing:0px;">)</div>
<div class="t" style="left:0.0px;top:308.53px;font-size:14.5px;color:#0a0a0a;font-weight:normal;letter-spacing:0px;">)</div>
<div class="t" style="left:0.7px;top:332.53px;font-size:14.5px;color:#0a0a0a;font-weight:bold;letter-spacing:0px;">4)</div>
<div class="r" style="left:207px;top:134px;width:1px;height:24px;background:#fff"></div>
<div class="r" style="left:208px;top:133px;width:1px;height:26px;background:#dedede"></div>
<div class="r" style="left:209px;top:134px;width:9px;height:24px;background:#fff"></div>
<div class="r" style="left:43.5px;top:247.1px;width:1.7px;height:1.7px;background:#8e8e8e"></div>
<div class="r" style="left:46.4px;top:247.1px;width:1.7px;height:1.7px;background:#8e8e8e"></div>
<div class="r" style="left:49.3px;top:247.1px;width:1.7px;height:1.7px;background:#8e8e8e"></div>
<div class="r" style="left:41.7px;top:271.1px;width:1.7px;height:1.7px;background:#111"></div>
<div class="r" style="left:44.6px;top:271.1px;width:1.7px;height:1.7px;background:#111"></div>
<div class="r" style="left:47.5px;top:271.1px;width:1.7px;height:1.7px;background:#111"></div>
<svg class="r" style="left:0;top:0" width="1497" height="887" viewBox="0 0 1497 887">
<defs>
<radialGradient id="rd" cx="0.35" cy="0.35" r="0.7"><stop offset="0" stop-color="#ff8080"/><stop offset="0.5" stop-color="#e8201c"/><stop offset="1" stop-color="#a00"/></radialGradient>
<linearGradient id="bl" x1="0" y1="0" x2="1" y2="1"><stop offset="0" stop-color="#e8f0ff"/><stop offset="1" stop-color="#6f8ef0"/></linearGradient>
<linearGradient id="tabic" x1="0" y1="0" x2="1" y2="1"><stop offset="0" stop-color="#f0f4ff"/><stop offset="0.5" stop-color="#7f9aff"/><stop offset="1" stop-color="#1030e0"/></linearGradient>
<linearGradient id="orf" x1="0" y1="0" x2="1" y2="1"><stop offset="0" stop-color="#ffe66a"/><stop offset="1" stop-color="#f39a2a"/></linearGradient>
<radialGradient id="sph" cx="0.55" cy="0.3" r="0.8"><stop offset="0" stop-color="#fff"/><stop offset="0.6" stop-color="#d8d8d8"/><stop offset="1" stop-color="#888"/></radialGradient>
</defs>
<circle cx="194.4" cy="1.8" r="4.2" fill="#5cbfae" stroke="#333" stroke-width="1"/>
<rect x="186.5" y="1.5" width="8" height="8" fill="#5cbfae" stroke="#333" stroke-width="1"/>
<path d="M190.2,1.5 A4.2,4.2 0 0 1 194.5,6" fill="none" stroke="#333" stroke-width="0.9"/>
<path d="M193,22 L199.5,23 L199.5,34 L193,34.5 Z" fill="#7f9ae8" stroke="#4a6ad0" stroke-width="0.8"/>
<path d="M185.5,25 L193,22.5 L193,34.5 L185.5,31.5 Z" fill="#f08a30" stroke="#5a7ad8" stroke-width="0.8"/>
<path d="M187,28 L192,27 L192,31.5 L187,30.5 Z" fill="#ffe070"/>
<path d="M188,21 L193,20.5 L199.5,22.5 L193,23.5 Z" fill="#d8e2ff" stroke="#6a86e0" stroke-width="0.6"/>
<rect x="364.5" y="-1" width="6" height="9.3" fill="#dde6f8" stroke="#4f5ff5" stroke-width="1.3"/>
<rect x="370.5" y="-1" width="8" height="9.3" fill="#f7e8a0" stroke="#e04040" stroke-width="1.2" stroke-dasharray="1.2,1.2"/>
<circle cx="371.3" cy="26" r="3.3" fill="#7aa0e8" stroke="#4a70d0" stroke-width="0.6"/>
<path d="M365,31 L369.5,23.5 M377.5,31 L373,23.5 M371.3,25 L371.3,33.7" stroke="#f0604a" stroke-width="1.1" fill="none"/>
<path d="M364.5,31 L371.3,33.5 L378.3,31" stroke="#5070c8" stroke-width="1" fill="none"/>
<path d="M555.5,-1 L560.5,1 L560.5,9.6 L555.5,7.5 Z" fill="url(#orf)" stroke="#ef5040" stroke-width="0.9"/>
<path d="M562.5,1 L569.5,0 L569.5,4 M563,3.5 L566,1.5 M562.5,6 L569.5,6 L569.5,9.5 L562.5,9.5 Z" fill="none" stroke="#333" stroke-width="1.1"/>
<path d="M555.5,24.5 L561,21 L569,23 L569,29 L561,34 L555.5,32 Z" fill="#d4a8ec"/>
<path d="M555.5,24.5 L561,27 L561,34.5 L555.5,32 Z" fill="url(#orf)" stroke="#ef5040" stroke-width="0.9"/>
<path d="M562,26 L569.5,34 M569.5,26 L562,34" stroke="#555" stroke-width="1.6"/>
<path d="M733,0 L741,0 L739,3.5 L735,4 Z" fill="#8fc8a0" stroke="#7aa8a0" stroke-width="0.6"/>
<path d="M888.5,-1 L896,-1 L896,10.5 L889,7.5 Z" fill="#f8f0c0" stroke="#f0a030" stroke-width="1.1"/>
<path d="M898.5,0 L903.5,5.3 L898.5,10.7 L893.5,5.3 Z" fill="#fff" stroke="#222" stroke-width="1.1"/>
<path d="M896,5.3 L901,5.3 M898.5,2.8 L898.5,7.8" stroke="#222" stroke-width="0.9"/>
<path d="M898.6,20.8 L898.6,26 M896,23.4 L901.2,23.4" stroke="#3a78f0" stroke-width="1.2"/>
<path d="M889,27.5 L898,26.5 L901,28.5 L901,33.5 L892,34 L889,32 Z" fill="#f4c860" stroke="#e0a840" stroke-width="0.7"/>
<path d="M892,28.5 L892,33.5 M895,28 L895,33.5 M898,27.8 L898,33.5" stroke="#fff4b0" stroke-width="1"/>
<path d="M255.5,80 L261,80 L263,91 L256,89 Z M255.5,84.5 L262,85.5 M259,80 L260,90" fill="none" stroke="#bdbdbd" stroke-width="0.9"/>
<path d="M259.5,76 L259.5,82 M256.5,79 L262.5,79" stroke="#bdbdbd" stroke-width="0.9"/><circle cx="259.5" cy="79" r="2.2" fill="none" stroke="#bdbdbd" stroke-width="0.8"/>
<circle cx="266.5" cy="80" r="3.4" fill="none" stroke="#bdbdbd" stroke-width="1"/><circle cx="267.8" cy="85.5" r="3.4" fill="none" stroke="#bdbdbd" stroke-width="1"/>
<path d="M282,80.5 L286,77.5 L286,79.5 C289,79.5 290,78 289,77 C292,78 291,82 286,82 L286,84 Z" fill="#bdbdbd"/>
<path d="M289,84.5 L296.5,84.5 L293.5,88 L293.5,91.5 L292,91.5 L292,88 Z" fill="#e2e2e2" stroke="#d0d0d0" stroke-width="0.6"/>
<rect x="303.5" y="76.5" width="15" height="15" fill="#fff" stroke="#d23a3a" stroke-width="1.1"/>
<circle cx="308.5" cy="81.7" r="2.7" fill="none" stroke="#e03030" stroke-width="0.9"/>
<path d="M308.5,78 L308.5,85.3 M304.8,81.7 L312.2,81.7" stroke="#333" stroke-width="0.9"/>
<path d="M311.5,84 L317,84 L315,87 L315,89.8 L313.5,89.8 L313.5,87 Z" fill="#f0b020"/>
<polygon points="325,81.8 332.2,81.8 328.6,85.8" fill="#111"/>
<path d="M342.5,80 C343,76 348,75.5 349,79.5" fill="none" stroke="#bdbdbd" stroke-width="1.3"/><path d="M341,78 L344,81.5 L345,77.5 Z" fill="#bdbdbd"/>
<circle cx="351.5" cy="86.5" r="3" fill="none" stroke="#bdbdbd" stroke-width="0.9"/><path d="M351.5,81.5 L351.5,91.5 M346.5,86.5 L356.5,86.5" stroke="#bdbdbd" stroke-width="0.9"/>
<path d="M365.5,79 C367,76 371,76 372,78 C374,76.5 376,78 375,80.5" fill="none" stroke="#bdbdbd" stroke-width="1.5"/>
<rect x="374.5" y="82.5" width="3.2" height="3" fill="none" stroke="#bdbdbd" stroke-width="0.9"/><rect x="376" y="85.5" width="5" height="5.5" fill="none" stroke="#bdbdbd" stroke-width="0.9"/><path d="M375.5,85.5 L375.5,91.5 M376,88 L381,88" stroke="#bdbdbd" stroke-width="0.8"/>
<path d="M396.4,76.2 L401.4,79.3 L401.4,85.2 L396.4,88.6 L391.3,85.2 L391.3,79.3 Z M396.4,82.4 L391.8,79.6 M396.4,82.4 L401,79.6 M396.4,82.4 L396.4,88" fill="none" stroke="#222" stroke-width="1" stroke-dasharray="0.01,1.9" stroke-linecap="round"/>
<circle cx="402.6" cy="87.6" r="3.3" fill="none" stroke="#e02020" stroke-width="1.1"/><path d="M402.6,83 L402.6,92.2 M398,87.6 L407.2,87.6" stroke="#333" stroke-width="1.1"/>
<rect x="416.5" y="78.5" width="13" height="11" fill="none" stroke="#333" stroke-width="1" stroke-dasharray="2,1.6"/>
<circle cx="416.4" cy="78.3" r="1.6" fill="url(#rd)"/><circle cx="429.3" cy="89.5" r="1.6" fill="url(#rd)"/>
<polygon points="438.8,81.8 446,81.8 442.4,85.8" fill="#111"/>
<path d="M456.5,86.5 C457,82 460,79 462.5,78.5 L466,78 C469,78 471,80 471,83 L471,88 L466.5,90 L462,91 Z" fill="#e8ecef" stroke="#5a6080" stroke-width="0.9"/>
<path d="M466,78 C463,81 462.5,86 462.5,91 M461,81 L466,83.5" fill="none" stroke="#5a6080" stroke-width="0.8"/><path d="M461.5,80.7 L465.5,82.5" stroke="#e83030" stroke-width="1.3"/>
<path d="M480,78.5 L487,77 L495.5,80 L495.5,88.5 L488,91.5 L480,88.5 Z" fill="#8ab8f0"/><path d="M480,78.5 L487,77 L495.5,80 L488,81.5 Z" fill="#eef4fc"/><path d="M488,81.5 L495.5,80 L495.5,88.5 L488,91.5 Z" fill="#4a78e8"/>
<path d="M486.5,76.5 L486.5,85.5 L495,88" fill="none" stroke="#f06060" stroke-width="0.6"/>
<polygon points="507,79 510.5,81.5 507,84" fill="#1aa01a"/><polygon points="507,86.5 510.5,89 507,91.5" fill="#e02020"/>
<path d="M516.5,79.5 L522.3,85.3 L516.5,91.1 L510.7,85.3 Z" fill="none" stroke="#999" stroke-width="0.6"/>
<circle cx="516.5" cy="80" r="1.4" fill="#111"/><circle cx="516.5" cy="90.5" r="1.4" fill="#111"/><circle cx="511.2" cy="85.3" r="1.4" fill="#111"/><circle cx="521.8" cy="85.3" r="1.4" fill="#111"/>
<path d="M516.5,83.3 L518.5,85.3 L516.5,87.3 L514.5,85.3 Z" fill="#f5d800"/>
<path d="M533.3,90.8 L543.5,80.5" stroke="#111" stroke-width="1.1"/><circle cx="543.5" cy="80.4" r="1.6" fill="url(#rd)"/>
<path d="M558.5,91.5 L571,79" stroke="#111" stroke-width="1.1"/><circle cx="564.5" cy="85.4" r="1.6" fill="url(#rd)"/>
<path d="M581,77.2 C586,76.5 587.5,80 587.5,84 C587.5,88 589,90.5 594.5,90.3" fill="none" stroke="#333" stroke-width="1"/><circle cx="587.5" cy="83.5" r="1.5" fill="url(#rd)"/>
<path d="M608.5,85.3 L612.3,78.4 L617.4,90.6 L621.3,83.3" fill="none" stroke="#a040d8" stroke-width="0.8"/><path d="M608.5,85.3 C611,83 614,83.5 617.4,86.5 L621.3,83.3" fill="none" stroke="#111" stroke-width="1"/>
<circle cx="612.3" cy="78.4" r="1.5" fill="url(#rd)"/><circle cx="608.5" cy="85.4" r="1.5" fill="url(#rd)"/><circle cx="617.4" cy="90.6" r="1.5" fill="url(#rd)"/><circle cx="621.4" cy="83.3" r="1.5" fill="url(#rd)"/>
<path d="M632.4,87.5 C633,84 634.5,82.2 635.4,82.2 C637.5,82.2 639,85.8 641.5,85.5 C643.5,85 644,83 645.5,81.2" fill="none" stroke="#111" stroke-width="1"/>
<circle cx="632.4" cy="87.5" r="1.4" fill="url(#rd)"/><circle cx="635.4" cy="82.2" r="1.4" fill="url(#rd)"/><circle cx="641.5" cy="85.5" r="1.4" fill="url(#rd)"/><circle cx="645.5" cy="81.2" r="1.4" fill="url(#rd)"/>
<path d="M664.5,77 L664.5,91 M657,86.5 C659,82 670,82 672,86.5" fill="none" stroke="#222" stroke-width="1"/><circle cx="664.5" cy="82.4" r="1.5" fill="url(#rd)"/>
<circle cx="689" cy="84" r="7" fill="none" stroke="#111" stroke-width="1.3"/><path d="M689,80.5 L690,83 L692.5,84 L690,85 L689,87.5 L688,85 L685.5,84 L688,83 Z" fill="#e02020"/>
<circle cx="714.3" cy="83.6" r="6" fill="none" stroke="#555" stroke-width="0.9"/><circle cx="714.3" cy="77.6" r="1.5" fill="url(#rd)"/><circle cx="714.3" cy="89.6" r="1.5" fill="url(#rd)"/><circle cx="708.3" cy="83.6" r="1.5" fill="url(#rd)"/><circle cx="720.3" cy="83.6" r="1.5" fill="url(#rd)"/>
<path d="M739.5,78 L739.5,91 M733,84.3 L746,84.3" stroke="#111" stroke-width="1.3"/><circle cx="739.5" cy="84.3" r="1.7" fill="url(#rd)"/>
<path d="M758,91.5 L770.8,79" stroke="#111" stroke-width="1.1"/><circle cx="761.5" cy="88.3" r="1.6" fill="url(#rd)"/>
<path d="M781,82 C782,78 785,76.5 787,76.5 L795,78.5 L792,82 L792,90.5 C788,89 782,88 781,82 Z" fill="url(#bl)" stroke="#7a9ad8" stroke-width="0.8"/><path d="M792,82 L796,86.5 L792,90.5 Z" fill="#ddd"/><circle cx="791.3" cy="81.2" r="1.6" fill="url(#rd)"/>
<path d="M805,87.5 L812,79.5 L820,81.5 L818.5,85 L812.3,91.5 Z" fill="#fff" stroke="#3a40b0" stroke-width="1"/><path d="M808.5,83.5 L815.5,86 M810.5,81 L816,88.5 M813.5,80.5 L809,89.5" stroke="#3a40b0" stroke-width="0.8"/><circle cx="815.6" cy="82.6" r="1.7" fill="url(#rd)"/>
<path d="M833.5,77 L842.5,80.5 L842.5,93 L833.5,89.5 Z M833.5,81.3 L842.5,84.5 M833.5,85.5 L842.5,88.7 M836.5,78.2 L836.5,90.8 M839.5,79.3 L839.5,91.8" fill="none" stroke="#222" stroke-width="0.9"/><circle cx="839.3" cy="85.2" r="1.5" fill="url(#rd)"/>
<rect x="870.5" y="77.5" width="14.5" height="13" fill="#eef3f8" stroke="#2040f0" stroke-width="1" stroke-dasharray="1.5,1"/><rect x="870.5" y="77" width="14.5" height="2.4" fill="#4a6aa0"/>
<circle cx="877.7" cy="84.3" r="3.2" fill="#dde" stroke="#666" stroke-width="1"/><path d="M880,86.5 L882.5,89.5" stroke="#e0a020" stroke-width="1.6"/><circle cx="884.5" cy="80.5" r="1.6" fill="url(#rd)"/><circle cx="871.4" cy="89.5" r="1.6" fill="url(#rd)"/>
<rect x="895.5" y="77.5" width="14" height="10.5" fill="#e8ecf4" stroke="#6070b0" stroke-width="1"/><path d="M900.5,85 C901,83 903,82.5 904,82 L906,81.5 L908.5,83 L909,88 L907,90.5 L903,90 Z" fill="#f1d8a0" stroke="#d8b880" stroke-width="0.5"/>
<path d="M921,85.5 A6,6 0 0 1 932.5,81.5 M933,84 A6,6 0 0 1 921.5,87" fill="none" stroke="#3a58b8" stroke-width="1.6"/><polygon points="931,79 934.5,83.5 929.5,83.5" fill="#3a58b8"/><polygon points="923,89.5 919.5,85 924.5,85" fill="#3a58b8"/>
<path d="M946,84.5 L954,82 L957,82.5 L957,87 L949.5,91 L946,90.5 Z" fill="#8aa0f0" stroke="#5a78e0" stroke-width="0.7"/><path d="M946,84.5 L949.5,85 L949.5,91 L946,90.5 Z" fill="#c8d4f8"/><path d="M959.5,77.5 L959.5,81 M957.8,79.3 L961.2,79.3" stroke="#e03030" stroke-width="1"/>
<path d="M969.5,76.5 L977.5,76.5 L977.5,86 L969.5,86 Z M973,81 L976,81 M971,80 L972,79 M971,83 L972,82 M973,83.5 L976,83.5" fill="none" stroke="#bdbdbd" stroke-width="0.9"/><path d="M973,87 L980,84.5 L984.5,83.5 L984.5,86.5 L980.5,91.5 L973,91.5 Z M974,90 L980,86" fill="none" stroke="#bdbdbd" stroke-width="0.9"/>
<rect x="996.5" y="77.5" width="13.5" height="12.5" fill="#e8f0f8" stroke="#3a4af0" stroke-width="1.2"/><rect x="997" y="78" width="12.5" height="1.8" fill="#5a7090"/>
<path d="M999.5,81.5 L1002,84 M1007.5,81.5 L1005,84 M999.5,88 L1002,85.5 M1007.5,88 L1005,85.5" stroke="#f05030" stroke-width="1.8"/>
<polygon points="1019,82 1026.3,82 1022.6,86" fill="#111"/>
<path d="M1035.5,84 L1038.5,79.5 L1044,77 L1044,84.5 L1049.5,86.5 L1046,89.5 L1039,89.5 L1035,86.5 Z" fill="#bcbcbc" stroke="#555" stroke-width="0.9"/><path d="M1037.5,87 L1048,87" stroke="#444" stroke-width="1"/>
<polygon points="1058,82 1065.3,82 1061.6,86" fill="#111"/>
<path d="M1076.5,80 L1082,77.5 L1089.5,79.5 L1089.5,88 L1084,90.5 L1076.5,88 Z" fill="#a8b8f0" stroke="#6a80e0" stroke-width="0.8"/><path d="M1076.5,80 L1084,82 L1084,90.5 L1076.5,88 Z" fill="#cad6f8" stroke="#6a80e0" stroke-width="0.6"/><path d="M1084,82 L1089.5,79.5 L1089.5,88 L1084,90.5 Z" fill="#5a70d8"/>
<polygon points="1098.7,82 1106,82 1102.4,86" fill="#111"/>
<polygon points="1114,79 1118,82 1114,85" fill="#30b030"/><polygon points="1115,84.5 1120,87.5 1115,90.5" fill="#e04030"/>
<path d="M1124,78.7 L1129.5,84 L1124,89.3 L1119,84 Z" fill="#e0e8f8" stroke="#7a8ab0" stroke-width="0.9"/><path d="M1123,81.5 L1126,84 L1123,86.5 Z" fill="#4a68d0"/>
<polygon points="1137.8,82 1145.2,82 1141.5,86" fill="#111"/>
<g transform="translate(226.5,106.5)"><path d="M0.5,3 L4.5,0.8 L9,1.5 L9,8 L14,9 L14,12 L9.5,14.3 L4.5,13.5 L0.5,11.5 Z" fill="#1f3ff0"/><path d="M1.5,4 L4.5,5 L4.5,12.5 L1.5,11 Z" fill="#dfe6ff"/><path d="M2,3 L5,1.8 L8,2.5 L5,3.8 Z" fill="#f4f6ff"/><path d="M5.5,10.5 L9,9.2 L13,10 L9.5,11.5 Z" fill="#e8eeff"/><path d="M4.5,12.5 L9.5,13.8 L9.5,11.8 L4.5,10.8 Z" fill="#8fa4ff"/></g>
<g transform="translate(398,106.5)"><path d="M0.5,3 L4.5,0.8 L9,1.5 L9,8 L14,9 L14,12 L9.5,14.3 L4.5,13.5 L0.5,11.5 Z" fill="#1f3ff0"/><path d="M1.5,4 L4.5,5 L4.5,12.5 L1.5,11 Z" fill="#dfe6ff"/><path d="M2,3 L5,1.8 L8,2.5 L5,3.8 Z" fill="#f4f6ff"/><path d="M5.5,10.5 L9,9.2 L13,10 L9.5,11.5 Z" fill="#e8eeff"/><path d="M4.5,12.5 L9.5,13.8 L9.5,11.8 L4.5,10.8 Z" fill="#8fa4ff"/></g>
<path d="M550.3,112.3 L550.3,110.2 L543.6,110.2 L543.6,119.4 L550.3,119.4 L550.3,116.8" fill="none" stroke="#fff" stroke-width="1.5"/><path d="M546.8,116.6 L552.6,110.8" stroke="#fff" stroke-width="2"/>
<path d="M559.8,110.8 L566.2,117.3 M566.2,110.8 L559.8,117.3" stroke="#fff" stroke-width="2.4"/>
<path d="M255.3,811.6 L269.5,794.2 L288.4,800.5 L294.7,816.3 L281.3,834.5 L263.1,827.4 Z" fill="#d6d6d6" fill-opacity="0.85" stroke="#a8a8a8" stroke-width="0.6"/>
<path d="M277.4,811.6 L269.5,794.2 M277.4,811.6 L294.7,816.3 M277.4,811.6 L263.1,827.4 M255.3,811.6 L277.4,811.6 M277.4,811.6 L288.4,800.5" stroke="#b0b0b0" stroke-width="0.5"/>
<path d="M280.5,831 L270,809" stroke="#e6a8a8" stroke-width="2"/><polygon points="267.9,803.7 273.5,811.5 267,812" fill="#e6a8a8"/><path d="M265.5,801 L269,799 M265.5,799 L269,803.5" stroke="#eab0b0" stroke-width="0.7"/>
<path d="M281,834 L257,825.5" stroke="#1e8a1e" stroke-width="2.2"/><polygon points="249.7,824.2 259,822.5 256.5,829" fill="#1e8a1e"/>
<path d="M244,819.5 L246,822 L248,819.5 M246,822 L246,827" fill="none" stroke="#2a9a2a" stroke-width="0.8"/>
<path d="M283.5,832 L301,812" stroke="#0a2ad8" stroke-width="2.4"/><polygon points="305.8,806.8 303.5,815.5 298,810.5" fill="#0a2ad8"/>
<path d="M306.5,798 L312,798 L306.5,805.5 L312,805.5" fill="none" stroke="#3a5af8" stroke-width="0.8"/>
<circle cx="281.7" cy="835" r="3.4" fill="url(#sph)"/>
</svg>
</body></html>
